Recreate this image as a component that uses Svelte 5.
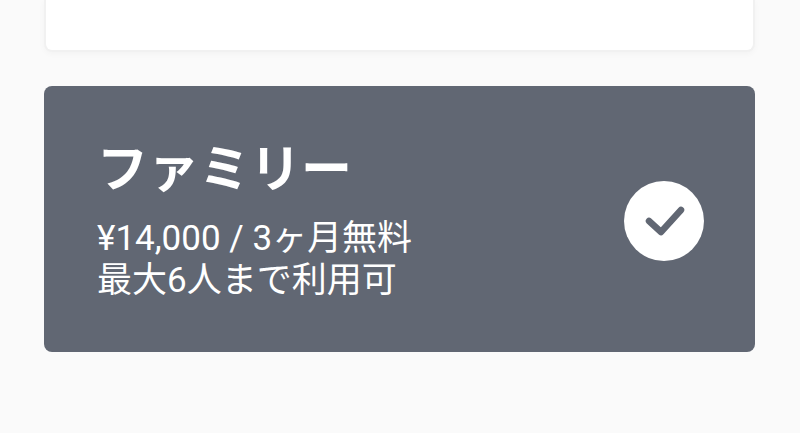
<script>
    let selected = true;
</script>

<main class="plans">
    <section class="plan previous" aria-hidden="true"></section>

    <label class="plan family">
        <span class="details">
            <strong class="name">ファミリー</strong>
            <span class="line">¥14,000 / 3ヶ月無料</span>
            <span class="line">最大6人まで利用可</span>
        </span>
        <input type="checkbox" bind:checked={selected} />
        <span class="mark">
            {#if selected}
                <svg viewBox="0 0 80 80" aria-hidden="true">
                    <path d="M25 40 L37 51 L57 29" />
                </svg>
            {/if}
        </span>
    </label>
</main>

<style>
    :global(body) {
        background: #fafafa;
    }

    .plans {
        display: flex;
        flex-direction: column;
        gap: 34px;
        padding: 0 45px 80px 44px;
        font-family: Roboto, "Noto Sans CJK JP", sans-serif;
    }

    .plan {
        box-sizing: border-box;
        border-radius: 8px;
    }

    .previous {
        height: 52px;
        background: #fff;
        border: 2px solid #f1f1f1;
        border-top: none;
        border-radius: 0 0 8px 8px;
        box-shadow: 0 2px 6px rgba(0, 0, 0, 0.03);
    }

    .family {
        position: relative;
        display: flex;
        align-items: center;
        justify-content: space-between;
        padding: 54px 51px 50px 53px;
        background: #616773;
        color: #fff;
        cursor: pointer;
    }

    .details {
        display: flex;
        flex-direction: column;
    }

    .name {
        margin-bottom: 18px;
        font-size: 51px;
        font-weight: 700;
        line-height: 60px;
    }

    .line {
        font-size: 35px;
        line-height: 42px;
    }

    input {
        position: absolute;
        opacity: 0;
    }

    .mark {
        flex: none;
        width: 80px;
        height: 80px;
        border-radius: 50%;
        background: #fff;
    }

    svg {
        display: block;
        fill: none;
        stroke: #616773;
        stroke-width: 6.5;
        stroke-linecap: round;
        stroke-linejoin: round;
    }

    input:focus-visible + .mark {
        outline: 3px solid #fff;
        outline-offset: 3px;
    }
</style>
